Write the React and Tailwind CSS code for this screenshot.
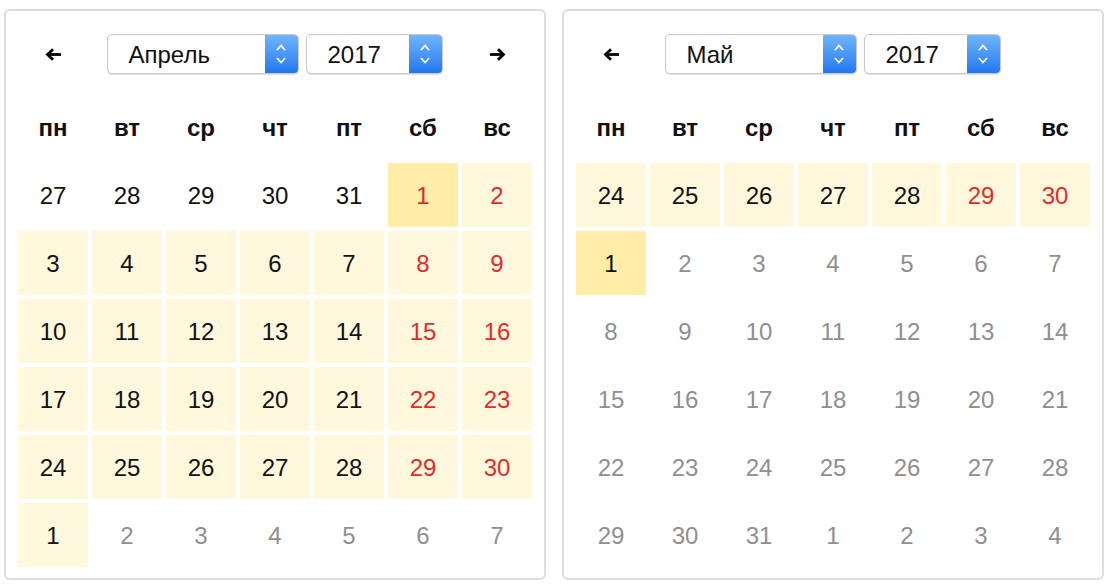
import React from 'react';

const DAYS = ['пн', 'вт', 'ср', 'чт', 'пт', 'сб', 'вс'];

// cell: [label, bg, colour]  bg: n = none, l = light, h = highlighted; colour: k = black, r = red, g = gray
const APRIL = [
  [['27','n','k'],['28','n','k'],['29','n','k'],['30','n','k'],['31','n','k'],['1','h','r'],['2','l','r']],
  [['3','l','k'],['4','l','k'],['5','l','k'],['6','l','k'],['7','l','k'],['8','l','r'],['9','l','r']],
  [['10','l','k'],['11','l','k'],['12','l','k'],['13','l','k'],['14','l','k'],['15','l','r'],['16','l','r']],
  [['17','l','k'],['18','l','k'],['19','l','k'],['20','l','k'],['21','l','k'],['22','l','r'],['23','l','r']],
  [['24','l','k'],['25','l','k'],['26','l','k'],['27','l','k'],['28','l','k'],['29','l','r'],['30','l','r']],
  [['1','l','k'],['2','n','g'],['3','n','g'],['4','n','g'],['5','n','g'],['6','n','g'],['7','n','g']],
];

const gray = (from, to) => {
  const out = [];
  for (let i = from; i <= to; i++) out.push([String(i), 'n', 'g']);
  return out;
};

const MAY = [
  [['24','l','k'],['25','l','k'],['26','l','k'],['27','l','k'],['28','l','k'],['29','l','r'],['30','l','r']],
  [['1','h','k'], ...gray(2, 7)],
  gray(8, 14),
  gray(15, 21),
  gray(22, 28),
  [...gray(29, 31), ...gray(1, 4)],
];

const BG = { n: 'bg-white', l: 'bg-[#fff8dc]', h: 'bg-[#ffeda8]' };
const FG = { k: 'text-[#111]', r: 'text-[#e42a2a]', g: 'text-[#8f8f8f]' };

function Arrow({ right }) {
  return (
    <svg width="17" height="13" viewBox="0 0 17 13" className={right ? 'rotate-180' : ''}>
      <path d="M2.5 6.5 H16" stroke="#000" strokeWidth="2.8" fill="none" />
      <path d="M8 1.2 L2.5 6.5 L8 11.8" stroke="#000" strokeWidth="2.8" fill="none" strokeLinejoin="miter" />
    </svg>
  );
}

function Select({ value, width }) {
  return (
    <div
      className="flex h-[40px] rounded-[5px] border border-[#c9c9c9] bg-white shadow-[0_1px_1px_rgba(0,0,0,0.12)] overflow-hidden"
      style={{ width }}
    >
      <div className="flex-1 flex items-center pl-[21px] pt-[2px] text-[24px] text-[#111]">{value}</div>
      <div className="w-[33px] flex items-center justify-center bg-linear-to-b from-[#6fb4fb] to-[#1f78ef]">
        <svg width="12" height="24" viewBox="0 0 12 24">
          <path d="M2 8 L6 3.5 L10 8" stroke="#fff" strokeWidth="1.8" fill="none" />
          <path d="M2 16 L6 20.5 L10 16" stroke="#fff" strokeWidth="1.8" fill="none" />
        </svg>
      </div>
    </div>
  );
}

function Calendar({ month, rows, showNext }) {
  return (
    <div className="w-[542px] h-[571px] border-2 border-[#dddddd] rounded-md px-[12px] pt-[23px] bg-white">
      {/* navigation */}
      <div className="flex items-center justify-between h-[40px]">
        <div className="w-[70px] flex justify-center"><Arrow /></div>
        <div className="flex gap-[7px] ml-[-1px]">
          <Select value={month} width={192} />
          <Select value="2017" width={137} />
        </div>
        <div className="w-[70px] flex justify-center">{showNext && <Arrow right />}</div>
      </div>

      {/* weekday header */}
      <div className="grid grid-cols-7 gap-1 mt-[34px] mb-[15px]">
        {DAYS.map(d => (
          <div key={d} className="h-[40px] flex items-center justify-center font-bold text-[24px] text-[#111]">
            {d}
          </div>
        ))}
      </div>

      {/* days */}
      <div className="grid grid-cols-7 gap-1">
        {rows.flat().map(([label, bg, fg], i) => (
          <div key={i} className={`h-16 flex items-center justify-center pt-[2px] text-[24px] ${BG[bg]} ${FG[fg]}`}>
            {label}
          </div>
        ))}
      </div>
    </div>
  );
}

export default function App() {
  return (
    <div
      className="w-[1108px] h-[587px] bg-white flex gap-4 pl-1 pt-[9px]"
      style={{ fontFamily: '"Liberation Sans", Arial, sans-serif' }}
    >
      <Calendar month="Апрель" rows={APRIL} showNext />
      <Calendar month="Май" rows={MAY} />
    </div>
  );
}
